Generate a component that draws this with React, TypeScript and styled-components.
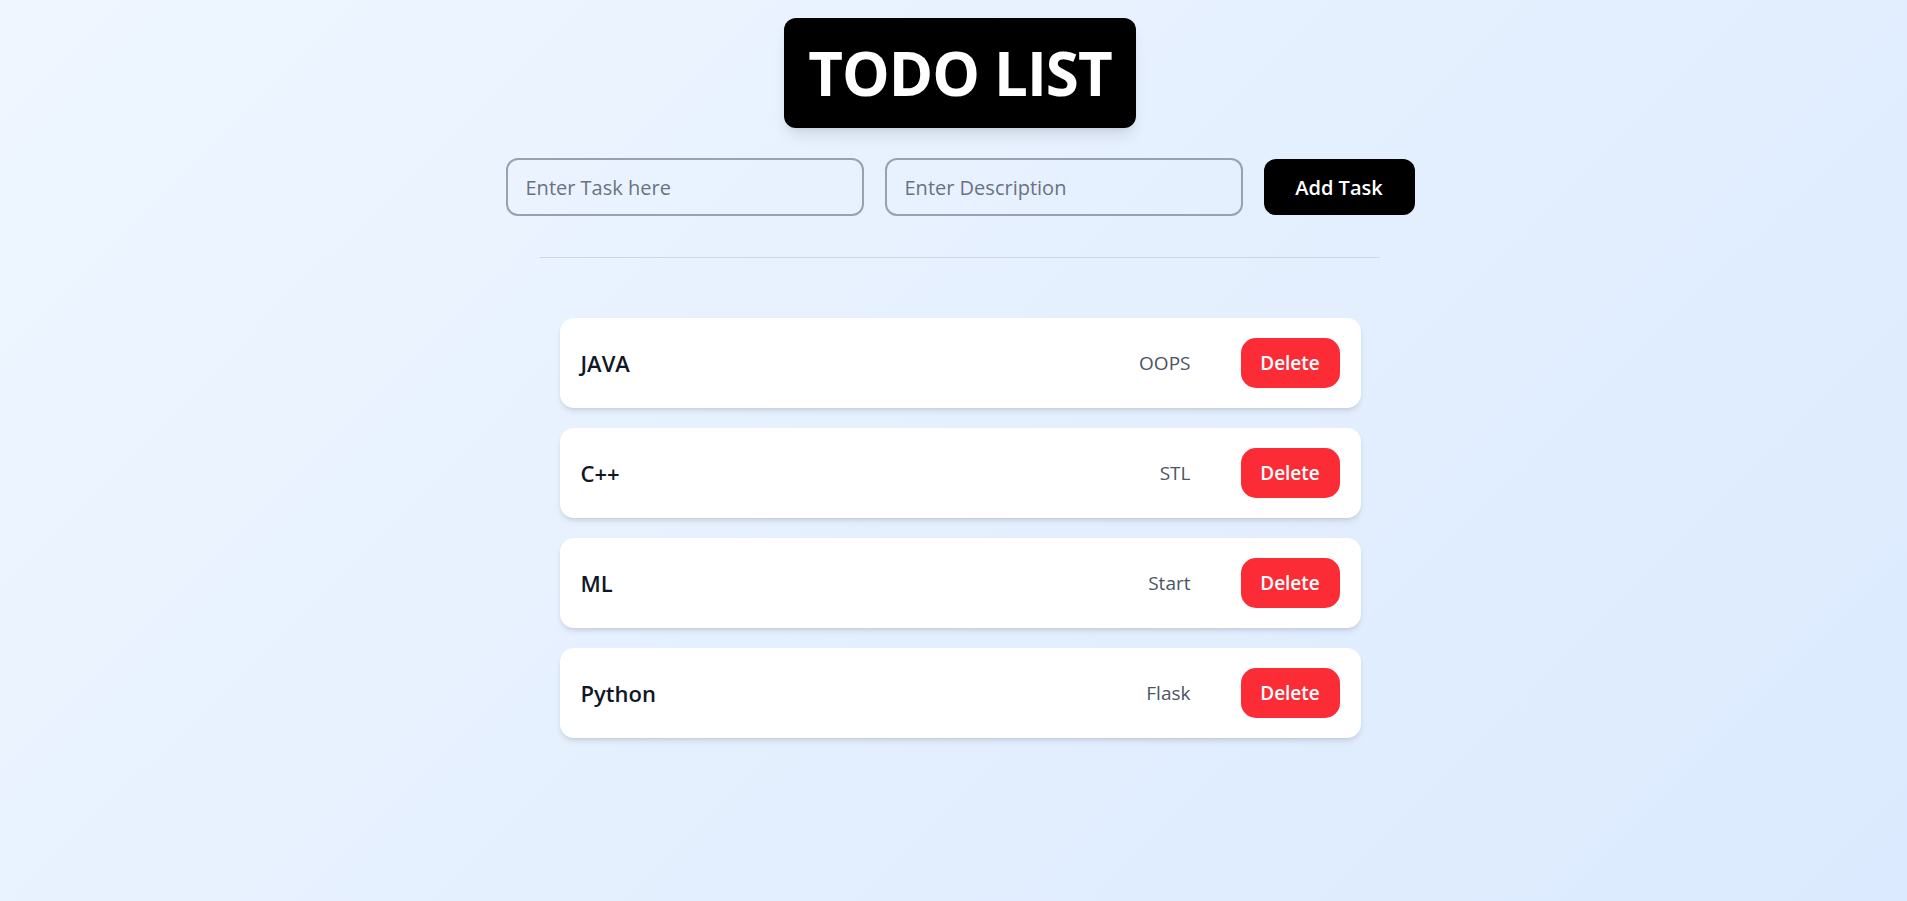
import React from "react";
import styled, { createGlobalStyle } from "styled-components";

const Global = createGlobalStyle`
  html, body { margin: 0; padding: 0; }
  body {
    font-family: "Open Sans", "Noto Sans", "Liberation Sans", sans-serif;
    min-height: 901px;
    background: linear-gradient(135deg, #eff6ff 0%, #dbeafe 100%);
  }
  * { box-sizing: border-box; }
`;

const Page = styled.main`
  min-height: 901px;
  padding: 18px 0 40px 13px;
  display: flex;
  flex-direction: column;
  align-items: center;
`;

const Title = styled.h1`
  margin: 0;
  background: #000;
  color: #fff;
  font-size: 60px;
  line-height: 60px;
  font-weight: 700;
  padding: 25px 24px;
  border-radius: 12px;
  letter-spacing: -0.9px;
  box-shadow: 0 10px 15px -3px rgba(0,0,0,0.1), 0 4px 6px -4px rgba(0,0,0,0.1);
`;

const Form = styled.div`
  margin-top: 30px;
  display: flex;
  align-items: center;
  gap: 21px;
`;

const Input = styled.input`
  width: 358px;
  height: 58px;
  border: 2px solid #99a1af;
  border-radius: 12px;
  background: transparent;
  padding: 0 18px;
  font-family: inherit;
  font-size: 20px;
  color: #101828;
  outline: none;
  &::placeholder { color: #6a7282; }
`;

const AddButton = styled.button`
  height: 56px;
  width: 151px;
  border: none;
  border-radius: 12px;
  background: #000;
  color: #fff;
  font-family: inherit;
  font-size: 20px;
  font-weight: 600;
  cursor: pointer;
`;

const Divider = styled.hr`
  width: 840px;
  margin: 41px 0 0;
  border: none;
  border-top: 1px solid #d1d5dc;
`;

const List = styled.ul`
  list-style: none;
  margin: 60px 0 0;
  padding: 0;
  width: 801px;
  display: flex;
  flex-direction: column;
  gap: 20px;
`;

const Card = styled.li`
  height: 90px;
  background: #fff;
  border-radius: 14px;
  padding: 0 21px 0 21px;
  display: flex;
  align-items: center;
  box-shadow: 0 4px 6px -1px rgba(0,0,0,0.1), 0 2px 4px -2px rgba(0,0,0,0.1);
`;

const TaskTitle = styled.span`
  flex: 1;
  font-size: 22px;
  font-weight: 600;
  color: #101828;
`;

const TaskDesc = styled.span`
  font-size: 19px;
  color: #4a5565;
  margin-right: 50px;
`;

const DeleteButton = styled.button`
  width: 99px;
  height: 50px;
  border: none;
  border-radius: 15px;
  background: #fb2c36;
  color: #fff;
  font-family: inherit;
  font-size: 19px;
  font-weight: 600;
  cursor: pointer;
`;

const tasks = [
  { title: "JAVA", desc: "OOPS" },
  { title: "C++", desc: "STL" },
  { title: "ML", desc: "Start" },
  { title: "Python", desc: "Flask" },
];

export default function App() {
  return (
    <>
      <Global />
      <Page>
        <Title>TODO LIST</Title>
        <Form>
          <Input placeholder="Enter Task here" />
          <Input placeholder="Enter Description" />
          <AddButton>Add Task</AddButton>
        </Form>
        <Divider />
        <List>
          {tasks.map((t) => (
            <Card key={t.title}>
              <TaskTitle>{t.title}</TaskTitle>
              <TaskDesc>{t.desc}</TaskDesc>
              <DeleteButton>Delete</DeleteButton>
            </Card>
          ))}
        </List>
      </Page>
    </>
  );
}
